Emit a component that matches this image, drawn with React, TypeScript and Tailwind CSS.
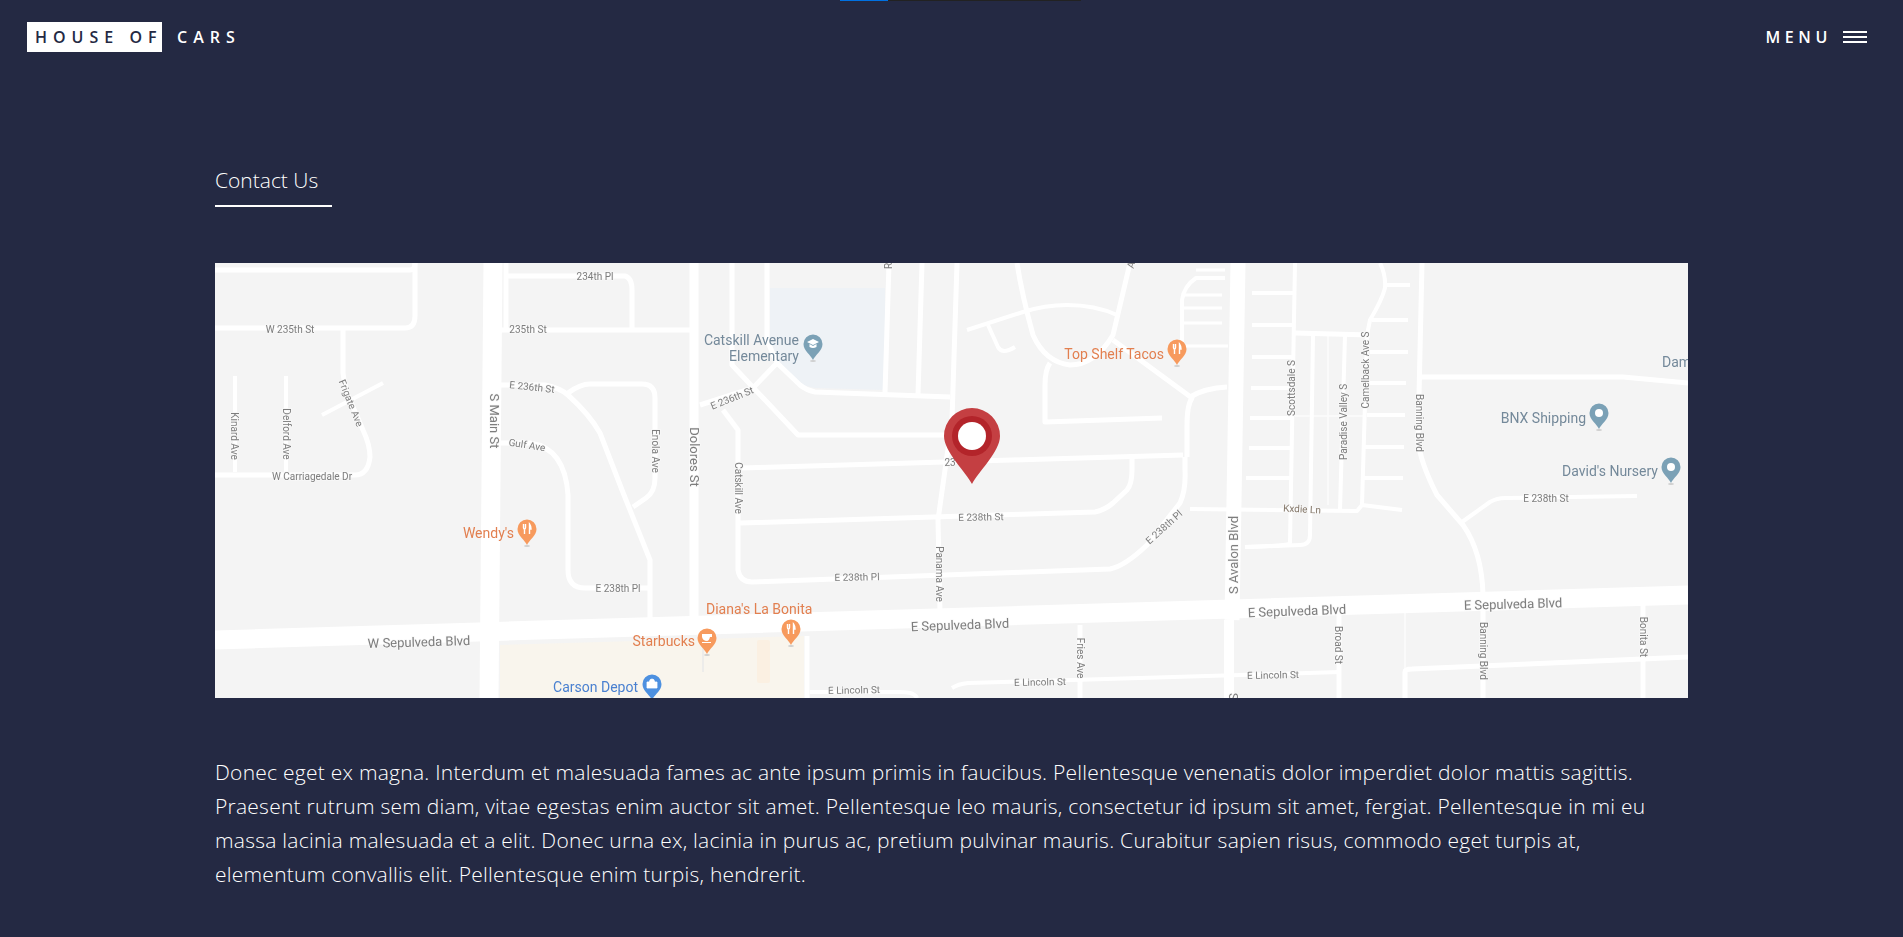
const ROADS: [string, number][] = [
  // west side
  ["M215 270 H410 Q415 270 415 263", 5],
  ["M215 328 H405 Q415 328 415 316 V263", 5],
  ["M343 330 V373 Q345 390 350 400 L363 430 Q370 445 370 457 Q368 475 355 475 H215", 5],
  ["M322 415 L383 383", 4],
  ["M235 376 V472", 4],
  ["M286 376 V472", 4],
  ["M506 263 V330", 5],
  ["M506 276 H625 Q632 278 632 290 V330", 5],
  ["M498 330 H690", 5],
  ["M498 385 H545 Q560 388 568 395 Q590 415 600 433 L622 490 L650 560 V622", 5],
  ["M568 393 Q580 384 590 384 H642 Q655 384 655 398 V478 Q655 492 646 498 L633 507", 5],
  ["M498 443 H530 Q565 448 568 495 V570 Q568 588 585 588 H650", 5],
  // main north-south roads
  ["M493 263 L489 698", 19],
  ["M694 263 V625", 9],
  // centre blocks
  ["M732 263 V365 L798 435 H945", 5],
  ["M767 263 V340 L777 363", 5],
  ["M700 405 L753 388 L777 363 L800 385 Q806 390 815 392 L950 397", 5],
  ["M889 263 L885 393", 5],
  ["M922 263 L918 395", 5],
  ["M957 263 L952 420 L938 520 L940 612", 5],
  ["M742 468 L1183 455", 5],
  ["M723 410 L738 430 L738 570 Q740 582 752 582 L1110 569 Q1125 566 1147 545 L1180 503 Q1186 490 1185 470 V457", 5],
  ["M740 523 L1095 512 Q1105 510 1113 503 L1127 490 Q1132 484 1132 470 V458", 5],
  ["M967 330 L1023 312 Q1045 305 1067 305 Q1095 305 1117 315", 4],
  ["M988 325 L998 347 Q1002 355 1015 347", 4],
  ["M1017 263 Q1022 295 1033 335 Q1045 362 1070 365 Q1095 365 1113 335 L1130 263", 5],
  ["M1050 363 Q1045 370 1045 385 V422 L1162 418", 5],
  ["M1113 340 L1192 398 Q1187 405 1187 425 V457", 5],
  ["M1190 397 Q1205 388 1227 387", 5],
  ["M1182 345 V300 Q1184 286 1196 278 H1225", 4],
  ["M1196 270 H1225 M1184 295 H1222 M1184 308 H1222 M1184 323 H1222 M1182 346 H1228", 3],
  // east side grid
  ["M1295 263 L1290 543 Q1290 546 1245 547", 4],
  ["M1252 293 H1295 M1252 325 H1295 M1252 357 H1295 M1251 388 H1293 M1250 418 H1292 M1249 448 H1291 M1246 478 H1290", 4],
  ["M1295 333 L1370 335", 5],
  ["M1313 335 L1310 535 Q1310 545 1300 545 L1245 547", 4],
  ["M1345 335 L1340 510", 4],
  ["M1367 335 L1362 505", 4],
  ["M1380 263 Q1386 275 1385 288 Q1382 300 1370 320 L1367 335", 4],
  ["M1385 285 H1410 M1372 320 H1408 M1370 352 H1408 M1368 383 H1406 M1367 415 H1405 M1365 447 H1404 M1364 478 H1403", 4],
  ["M1190 509 L1357 511 L1362 505 L1402 510", 4],
  ["M1422 263 L1418 440 Q1420 462 1437 495 L1463 525 Q1482 552 1483 595 V698", 5],
  ["M1420 377 H1623 L1688 383", 5],
  ["M1462 522 L1490 502 Q1497 498 1505 498 L1637 496", 4],
  // south of Sepulveda
  ["M807 636 V698", 5],
  ["M810 692 H900 Q915 692 917 698", 4],
  ["M952 688 Q958 684 968 683 L1340 672", 4],
  ["M1080 625 V698", 5],
  ["M1339 613 V698", 5],
  ["M1405 698 V672 Q1405 669 1412 669 L1688 657", 5],
  ["M1643 605 V698", 5],
  ["M1229 620 V698", 10],
  ["M1238 263 L1232 620", 15],
  ["M215 640 L1688 595", 19],
];

type Label = [string, number, number, number, number?, string?];

const GRAY = "#7d7d7d";
const ORANGE = "#e27f4f";
const SLATE = "#74899a";

const LABELS: Label[] = [
  ["234th Pl", 595, 276, 0],
  ["W 235th St", 290, 329, 0],
  ["235th St", 528, 329, 0],
  ["Kinard Ave", 234, 436, 90],
  ["Delford Ave", 286, 434, 90],
  ["Frigate Ave", 351, 403, 68],
  ["W Carriagedale Dr", 312, 476, 0],
  ["S Main St", 494, 421, 90, 13],
  ["E 236th St", 532, 387, 6],
  ["Gulf Ave", 527, 445, 9],
  ["Enola Ave", 655, 451, 90],
  ["Dolores St", 694, 457, 90, 13],
  ["E 236th St", 732, 398, -22],
  ["Catskill Ave", 738, 488, 90],
  ["R", 888, 266, -90],
  ["A", 1131, 265, -75],
  ["23", 950, 462, 0],
  ["Scottsdale S", 1291, 388, -90],
  ["Paradise Valley S", 1343, 422, -90],
  ["Camelback Ave S", 1365, 370, -90],
  ["Banning Blvd", 1419, 423, 90],
  ["W Sepulveda Blvd", 419, 642, -1.7, 13],
  ["E 238th Pl", 618, 588, 0],
  ["E 238th St", 981, 517, -1],
  ["Panama Ave", 939, 574, 90],
  ["E 238th Pl", 857, 577, -1],
  ["E 238th Pl", 1164, 527, -42],
  ["E Sepulveda Blvd", 960, 625, -2, 13],
  ["E Lincoln St", 854, 690, -1],
  ["Fries Ave", 1080, 658, 90],
  ["E Lincoln St", 1040, 682, -1],
  ["Kxdie Ln", 1302, 509, 3, 10, "#85786a"],
  ["S Avalon Blvd", 1233, 555, -90, 13],
  ["E Sepulveda Blvd", 1297, 611, -2, 13],
  ["E Sepulveda Blvd", 1513, 604, -1.5, 13],
  ["Broad St", 1338, 645, 90],
  ["Banning Blvd", 1483, 651, 90],
  ["Bonita St", 1643, 637, 90],
  ["E Lincoln St", 1273, 675, -1],
  ["E 238th St", 1546, 498, 0],
  ["S", 1233, 697, -90, 13],
];

// right-aligned place names next to their pins
const PLACES: [string, number, number, string][] = [
  ["Catskill Avenue", 799, 340, SLATE],
  ["Elementary", 799, 356, SLATE],
  ["Top Shelf Tacos", 1164, 354, ORANGE],
  ["BNX Shipping", 1586, 418, SLATE],
  ["David's Nursery", 1658, 471, SLATE],
  ["Wendy's", 514, 533, ORANGE],
  ["Starbucks", 695, 641, ORANGE],
  ["Carson Depot", 638, 687, "#4a80d0"],
];

function Pin({ x, y, color, kind }: { x: number; y: number; color: string; kind: "food" | "school" | "cafe" | "shop" | "dot" }) {
  return (
    <g>
      <ellipse cx={x} cy={y + 17} rx={3} ry={1} fill="#cfcfcf" />
      <path
        d={`M${x} ${y + 16} C${x - 2} ${y + 11} ${x - 9.5} ${y + 7} ${x - 9.5} ${y} A9.5 9.5 0 1 1 ${x + 9.5} ${y} C${x + 9.5} ${y + 7} ${x + 2} ${y + 11} ${x} ${y + 16}Z`}
        fill={color}
      />
      {kind === "dot" && <circle cx={x} cy={y} r={4} fill="#fff" />}
      {kind === "food" && (
        <path
          d={`M${x - 3.5} ${y - 5} V${y - 1.5} Q${x - 3.5} ${y} ${x - 2.5} ${y} V${y + 5} M${x - 1.5} ${y - 5} V${y - 1.5} Q${x - 1.5} ${y} ${x - 2.5} ${y} M${x + 2.5} ${y + 5} V${y - 5} Q${x + 4} ${y - 3} ${x + 4} ${y} L${x + 2.5} ${y}`}
          fill="none"
          stroke="#fff"
          strokeWidth={1.4}
        />
      )}
      {kind === "school" && (
        <path d={`M${x - 6} ${y - 2} L${x} ${y - 5} L${x + 6} ${y - 2} L${x} ${y + 1}Z M${x - 3.5} ${y} V${y + 3} Q${x} ${y + 5} ${x + 3.5} ${y + 3} V${y}L${x} ${y + 2}Z`} fill="#fff" />
      )}
      {kind === "cafe" && <path d={`M${x - 5} ${y - 4} H${x + 5} V${y - 1} H${x + 3} Q${x + 2} ${y + 3} ${x} ${y + 3} Q${x - 4} ${y + 3} ${x - 5} ${y - 1}Z M${x - 5} ${y + 4} H${x + 4} V${y + 5} H${x - 5}Z`} fill="#fff" />}
      {kind === "shop" && (
        <path d={`M${x - 5} ${y - 2} H${x + 5} V${y + 4} H${x - 5}Z M${x - 2.5} ${y - 2} Q${x - 2.5} ${y - 5} ${x} ${y - 5} Q${x + 2.5} ${y - 5} ${x + 2.5} ${y - 2}`} fill="#fff" stroke="#fff" strokeWidth={0.8} />
      )}
    </g>
  );
}

function MapPicture() {
  return (
    <div className="h-[435px] overflow-hidden bg-[#f4f4f4]">
      <svg viewBox="215 263 1473 435" className="block h-[435px] w-full blur-[0.5px]" style={{ fontFamily: "Roboto, sans-serif" }}>
        <path d="M770 288 H885 V390 L815 388 Q795 385 785 370 L770 345Z" fill="#eef2f6" />
        <path d="M500 645 L804 636 V698 H500Z" fill="#f9f5ed" />
        <rect x={757} y={640} width={13} height={43} rx={2} fill="#fbf0e2" />
        <path d="M703 640 V672" stroke="#e9e9e9" strokeWidth={1.5} />
        <path d="M1405 613 V669 M1328 335 V505 M1295 416 H1365" stroke="#fbfbfb" strokeWidth={1.5} fill="none" />
        {ROADS.map(([d, w], i) => (
          <path key={i} d={d} fill="none" stroke="#fff" strokeWidth={w} strokeLinejoin="round" />
        ))}
        {LABELS.map(([text, x, y, angle, size = 10, color = GRAY], i) => (
          <text
            key={i}
            x={x}
            y={y}
            fontSize={size}
            fill={color}
            textAnchor="middle"
            dominantBaseline="central"
            transform={`rotate(${angle} ${x} ${y})`}
            stroke="#f8f8f8"
            strokeWidth={1.5}
            paintOrder="stroke"
          >
            {text}
          </text>
        ))}
        {PLACES.map(([text, x, y, color]) => (
          <text key={text} x={x} y={y} fontSize={14} fill={color} textAnchor="end" dominantBaseline="central">
            {text}
          </text>
        ))}
        <text x={706} y={609} fontSize={14} fill={ORANGE} dominantBaseline="central">
          Diana's La Bonita
        </text>
        <text x={1662} y={362} fontSize={14} fill={SLATE} dominantBaseline="central">
          Dam
        </text>

        <Pin x={813} y={344} color="#7ba1b6" kind="school" />
        <Pin x={1177} y={349} color="#f79a5d" kind="food" />
        <Pin x={527} y={529} color="#f79a5d" kind="food" />
        <Pin x={791} y={629} color="#f79a5d" kind="food" />
        <Pin x={707} y={638} color="#f79a5d" kind="cafe" />
        <Pin x={652} y={684} color="#4d90e0" kind="shop" />
        <Pin x={1599} y={413} color="#7ba1b6" kind="dot" />
        <Pin x={1671} y={467} color="#7ba1b6" kind="dot" />

        <path d="M972 484 C966 472 944 452 944 436 A28 28 0 1 1 1000 436 C1000 452 978 472 972 484Z" fill="#c43f42" />
        <circle cx={972} cy={436} r={20} fill="#b3242a" />
        <circle cx={972} cy={436} r={14} fill="#fff" />
      </svg>
    </div>
  );
}

export default function App() {
  return (
    <main className="min-h-screen bg-[#242943] text-white" style={{ fontFamily: '"Open Sans", sans-serif' }}>
      <div className="ml-[840px] flex h-px">
        <div className="w-12 bg-[#0071e3]" />
        <div className="w-[193px] bg-[#222222]" />
      </div>

      <header className="flex items-center justify-between pl-[27px] pr-9 pt-[21px]">
        <div className="flex items-center text-[16px] font-semibold tracking-[6px]">
          <span className="flex h-[30px] w-[135px] items-center whitespace-nowrap bg-white pl-2 text-[#242943]">HOUSE OF</span>
          <span className="ml-[15px]">CARS</span>
        </div>
        <div className="flex items-center gap-[11px] text-[16px] font-semibold tracking-[4.6px]">
          <span>MENU</span>
          <span className="flex w-6 flex-col gap-[3px]">
            <span className="h-0.5 bg-white" />
            <span className="h-0.5 bg-white" />
            <span className="h-0.5 bg-white" />
          </span>
        </div>
      </header>

      <section className="px-[215px] pt-[108px]">
        <h2 className="w-[117px] border-b-2 border-white pb-[5px] text-[21px] font-light leading-[40px]">Contact Us</h2>
        <div className="mt-14">
          <MapPicture />
        </div>
        <p className="mt-[57px] text-[21px] font-light leading-[34px] tracking-[0.25px]">
          Donec eget ex magna. Interdum et malesuada fames ac ante ipsum primis in faucibus. Pellentesque venenatis dolor imperdiet dolor mattis sagittis.
          <br />
          Praesent rutrum sem diam, vitae egestas enim auctor sit amet. Pellentesque leo mauris, consectetur id ipsum sit amet, fergiat. Pellentesque in mi eu
          <br />
          massa lacinia malesuada et a elit. Donec urna ex, lacinia in purus ac, pretium pulvinar mauris. Curabitur sapien risus, commodo eget turpis at,
          <br />
          elementum convallis elit. Pellentesque enim turpis, hendrerit.
        </p>
      </section>
    </main>
  );
}
